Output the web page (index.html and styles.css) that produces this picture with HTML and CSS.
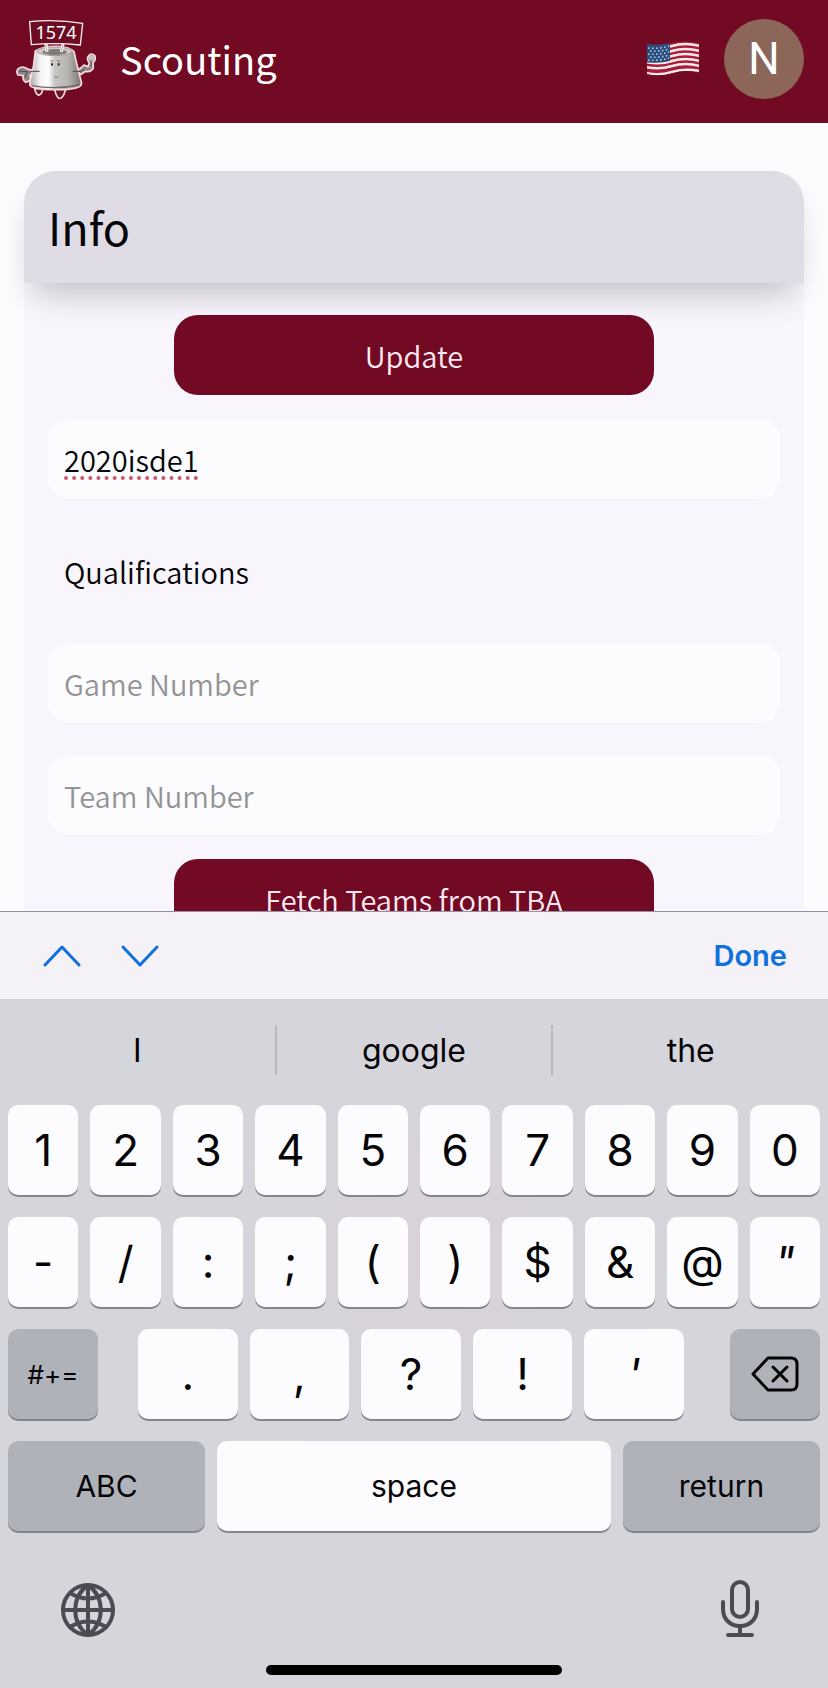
FILE: index.html
```html
<!DOCTYPE html>
<html lang="en">
<head>
<meta charset="utf-8">
<meta name="viewport" content="width=device-width, initial-scale=1">
<title>Scouting</title>
<link rel="stylesheet" href="styles.css">
</head>
<body>
<div class="app">
  <header class="topbar">
    <svg class="logo" viewBox="18 24 240 240" aria-hidden="true">
      <defs>
        <linearGradient id="metal" x1="0" x2="1">
          <stop offset="0" stop-color="#a9a7a6"/><stop offset=".2" stop-color="#f4f3f5"/><stop offset=".36" stop-color="#ffffff"/><stop offset=".48" stop-color="#c9c7c6"/><stop offset=".75" stop-color="#b5b3ae"/><stop offset="1" stop-color="#77736f"/>
        </linearGradient>
      </defs>
      <g stroke="#f9dbe4" stroke-width="5" stroke-linejoin="round">
        <path fill="#6b1726" d="M74 232q2 16 12 21q11-4 12-19zM134 234q3 22 15 30q15-8 17-30z"/>
        <path fill="#8f8784" d="M85 178L58 176L46 170Q35 165 25 173Q17 181 24 192L40 194Q36 206 48 214L62 207L60 193L85 186zM192 176L211 172L222 162L234 167L238 155Q228 145 236 134Q244 124 254 134Q260 145 249 155L250 171Q242 185 226 181L214 190L194 187z"/>
        <path fill="url(#metal)" d="M76 120Q100 105 140 106Q180 108 192 122Q200 160 214 213Q217 221 208 227Q180 238 142 236Q95 238 64 227Q57 222 60 210Q73 165 76 120z"/>
      </g>
      <ellipse cx="134" cy="121" rx="53" ry="13" fill="#cfcac5" stroke="#8b8580" stroke-width="2"/>
      <ellipse cx="134" cy="123" rx="37" ry="9" fill="#817a75"/>
      <path d="M108 99l3 24M159 99l-5 24" stroke="#fff" stroke-width="9"/>
      <path d="M108 102l3 20M159 102l-5 20" stroke="#aaa0a0" stroke-width="3"/>
      <path d="M59 32Q138 24 218 37L211 102Q136 94 64 101z" fill="#6d0b23" stroke="#fff0f6" stroke-width="4"/>
      <text class="logo-number" x="138" y="84" text-anchor="middle">1574</text>
      <path d="M121 151q5-4 9 0M141 151q5-4 9 0M133 197q6 5 12 0" fill="none" stroke="#4c4542" stroke-width="2"/>
      <ellipse cx="126" cy="160" rx="3" ry="5" fill="#332d2c"/><ellipse cx="146" cy="160" rx="3" ry="5" fill="#332d2c"/>
      <path d="M62 181h27M188 181h25l12-7M28 180l24 2-8 18M243 164v-12" fill="none" stroke="#4f4947" stroke-width="3"/>
      <circle cx="245" cy="141" r="8" fill="#c8c1be"/><path d="M65 224Q135 237 209 222" stroke="#6d6864" stroke-width="4" fill="none"/>
    </svg>
    <h1 class="brand">Scouting</h1>
    <button class="flag-button" aria-label="Language">
      <svg class="flag" viewBox="0 0 54 38" aria-hidden="true">
        <defs><clipPath id="wave"><path d="M1 4Q12 6 25 3T53 3V33Q40 29 27 33T1 34z"/></clipPath></defs>
        <g clip-path="url(#wave)">
          <path fill="#a51e35" d="M0 0h54v38H0z"/>
          <path fill="none" stroke="#ffe9ef" stroke-width="2.5" d="M0 7Q13 10 26 6T54 6M0 12Q13 15 26 11T54 11M0 17Q13 20 26 16T54 16M0 22Q13 25 26 21T54 21M0 27Q13 30 26 26T54 26M0 33Q13 36 26 32T54 31"/>
          <path fill="#2c4c7d" d="M0 2Q13 6 24 3V21Q13 24 0 22z"/>
          <path fill="none" stroke="#a9c9e2" stroke-width="1.6" stroke-dasharray="1.6 2.4" d="M2 8Q13 9 23 6M4 11Q13 12 23 9M2 14Q13 15 23 12M4 17Q13 18 23 15M2 20Q13 21 23 18"/>
        </g>
      </svg>
    </button>
    <button class="avatar" aria-label="Account">N</button>
  </header>

  <main class="content">
    <section class="card">
      <h2 class="card-title">Info</h2>
      <form class="card-body">
        <button class="action" type="button">Update</button>
        <div class="fields">
          <input class="field misspelled" type="text" value="2020isde1" aria-label="Event" spellcheck="false">
          <select class="field plain" aria-label="Stage"><option>Qualifications</option></select>
          <input class="field" type="text" placeholder="Game Number" aria-label="Game Number">
          <input class="field" type="text" placeholder="Team Number" aria-label="Team Number">
        </div>
        <button class="action" type="button">Fetch Teams from TBA</button>
      </form>
    </section>
  </main>

  <div class="accessory">
    <button class="step" aria-label="Previous field"><svg width="38" height="24" viewBox="0 0 38 24" aria-hidden="true"><path d="M2 21L19 3l17 18"/></svg></button>
    <button class="step" aria-label="Next field"><svg width="38" height="24" viewBox="0 0 38 24" aria-hidden="true"><path d="M2 3l17 18L36 3"/></svg></button>
    <button class="done">Done</button>
  </div>

  <div class="keyboard">
    <div class="suggestions">
      <button>I</button><button>google</button><button>the</button>
    </div>
    <div class="keys">
      <div class="row">
        <button class="key">1</button><button class="key">2</button><button class="key">3</button><button class="key">4</button><button class="key">5</button><button class="key">6</button><button class="key">7</button><button class="key">8</button><button class="key">9</button><button class="key">0</button>
      </div>
      <div class="row">
        <button class="key">-</button><button class="key">/</button><button class="key">:</button><button class="key">;</button><button class="key">(</button><button class="key">)</button><button class="key">$</button><button class="key">&amp;</button><button class="key">@</button><button class="key slanted">"</button>
      </div>
      <div class="row">
        <button class="key dark side symbols">#+=</button>
        <div class="row punctuation">
          <button class="key">.</button><button class="key">,</button><button class="key">?</button><button class="key">!</button><button class="key slanted">'</button>
        </div>
        <button class="key dark side" aria-label="Delete"><svg width="48" height="36" viewBox="0 0 48 36" aria-hidden="true"><path d="M17 2h23q6 0 6 6v20q0 6-6 6H17L2 18z"/><path d="M22 11l14 14M36 11L22 25"/></svg></button>
      </div>
      <div class="row">
        <button class="key dark word">ABC</button><button class="key word space">space</button><button class="key dark word">return</button>
      </div>
    </div>
    <div class="dock">
      <button aria-label="Switch keyboard"><svg width="56" height="56" viewBox="0 0 56 56" aria-hidden="true"><circle cx="28" cy="28" r="25"/><path d="M28 3C11 15 11 41 28 53C45 41 45 15 28 3zM28 3v50M3 28h50M10 11q18 11 36 0M10 45q18-11 36 0"/></svg></button>
      <button aria-label="Dictate"><svg width="40" height="58" viewBox="0 0 40 58" aria-hidden="true"><rect x="12" y="2" width="16" height="35" rx="8"/><path d="M3 22v7c0 10 7 17 17 17s17-7 17-17v-7M20 46v9M8 55h24"/></svg></button>
    </div>
    <div class="home-bar"></div>
  </div>
</div>
</body>
</html>
```
FILE: styles.css
```css
* {
  box-sizing: border-box;
}

body {
  margin: 0;
  background: #fcfcfe;
  color: #050507;
  font-family: "Noto Sans CJK JP", "Noto Sans", sans-serif;
}

button,
input,
select {
  margin: 0;
  padding: 0;
  border: 0;
  background: none;
  color: inherit;
  font: inherit;
}

svg {
  display: block;
}

.app {
  display: flex;
  flex-direction: column;
  height: 100vh;
}

.topbar {
  display: flex;
  flex: none;
  align-items: center;
  padding: 19px 24px 24px 16px;
  background: #710a22;
  color: #fff;
}

.logo {
  width: 80px;
  height: 80px;
}

.logo-number {
  fill: #fff;
  font-family: "Noto Sans", sans-serif;
  font-size: 54px;
}

.brand {
  flex: 1;
  margin: 0 0 0 24px;
  font-size: 38px;
  font-weight: 400;
  line-height: 80px;
}

.flag {
  width: 54px;
  height: 38px;
}

.avatar {
  width: 80px;
  height: 80px;
  margin-left: 24px;
  border-radius: 50%;
  background: #8c6659;
  font-family: Roboto, sans-serif;
  font-size: 44px;
}

.content {
  flex: 1;
  min-height: 0;
  overflow: hidden;
  padding: 48px 24px 0;
}

.card {
  border-radius: 32px;
  background: #f8f5fc;
}

.card-title {
  position: relative;
  margin: 0;
  padding: 24px;
  border-radius: 32px 32px 0 0;
  background: #dfdce6;
  box-shadow: 0 20px 32px -10px rgba(20, 20, 30, 0.24);
  font-size: 45px;
  font-weight: 400;
  line-height: 64px;
}

.card-body {
  position: relative;
  display: flex;
  flex-direction: column;
  align-items: center;
  gap: 24px;
  padding: 32px 24px;
}

.action {
  width: 480px;
  max-width: 100%;
  height: 80px;
  border-radius: 24px;
  background: #710a22;
  color: #ffe9f2;
  font-size: 29px;
  font-weight: 350;
}

.fields {
  display: flex;
  flex-direction: column;
  gap: 32px;
  width: 100%;
}

.field {
  width: 100%;
  height: 80px;
  padding: 0 16px;
  border-radius: 20px;
  background: #fcfcfe;
  font-size: 29px;
  font-weight: 350;
  appearance: none;
}

.field.plain {
  background: none;
}

.field::placeholder {
  color: #949496;
}

.misspelled {
  text-decoration: underline dotted #d0546e 4px;
  text-decoration-skip-ink: none;
  text-underline-offset: 4px;
}

.accessory {
  display: flex;
  flex: none;
  align-items: center;
  gap: 40px;
  height: 88px;
  padding: 0 41px 0 43px;
  border-top: 1px solid #9290a6;
  background: #f4f1f7;
  color: #1070de;
  font-family: Inter, sans-serif;
}

.step svg {
  fill: none;
  stroke: currentColor;
  stroke-width: 3;
  stroke-linecap: round;
  stroke-linejoin: round;
}

.done {
  margin-left: auto;
  font-size: 29px;
  font-weight: 600;
}

.keyboard {
  flex: none;
  padding-bottom: 13px;
  background: radial-gradient(circle at 52% 36%, #dad2db, #d5d5dc 240px);
  font-family: Inter, sans-serif;
}

.suggestions {
  display: flex;
  padding: 26px 0 30px;
}

.suggestions button {
  flex: 1;
  height: 50px;
  font-size: 32px;
}

.suggestions button + button {
  border-left: 2px solid #b9b9c5;
}

.keys {
  display: flex;
  flex-direction: column;
  gap: 22px;
  padding: 0 8px;
}

.row {
  display: flex;
  gap: 12px;
}

.key {
  display: flex;
  flex: 1 1 0;
  align-items: center;
  justify-content: center;
  min-width: 0;
  height: 90px;
  border-radius: 10px;
  background: #fcfcfe;
  box-shadow: 0 2px 0 #85858d;
  font-size: 44px;
}

.key.dark {
  background: #b0b2b9;
}

.key.side {
  flex: 0 0 90px;
}

.key.symbols {
  font-size: 26px;
}

.key.slanted {
  font-style: italic;
}

.key svg {
  fill: none;
  stroke: currentColor;
  stroke-width: 3;
  stroke-linecap: round;
  stroke-linejoin: round;
}

.punctuation {
  flex: 1;
  padding: 0 34px 0 28px;
}

.key.word {
  font-size: 30px;
}

.key.space {
  flex-grow: 2;
}

.dock {
  display: flex;
  align-items: flex-end;
  justify-content: space-between;
  padding: 49px 68px 27px 60px;
}

.dock svg {
  fill: none;
  stroke: #4b4b54;
  stroke-width: 4;
  stroke-linecap: round;
  stroke-linejoin: round;
}

.home-bar {
  width: 296px;
  height: 10px;
  margin: 0 auto;
  border-radius: 5px;
  background: #000;
}
```
